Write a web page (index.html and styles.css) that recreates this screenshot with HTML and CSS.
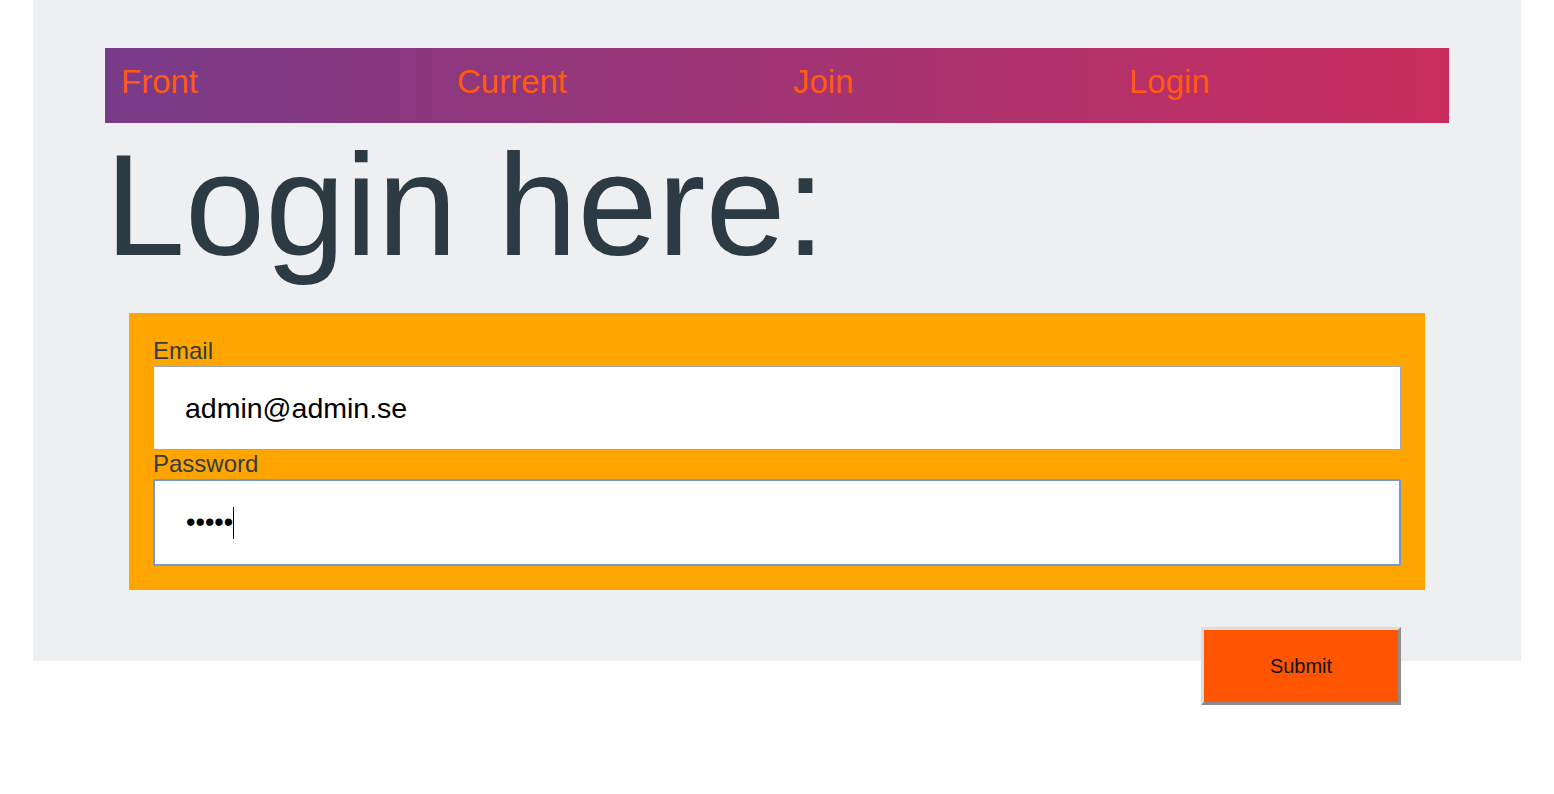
FILE: index.html
```html
<!DOCTYPE html>
<html lang="en">
<head>
<meta charset="utf-8">
<title>Login</title>
<link rel="stylesheet" href="styles.css">
</head>
<body>
<div class="page">
  <nav class="nav">
    <a class="nav-link" href="#">Front</a>
    <a class="nav-link" href="#">Current</a>
    <a class="nav-link" href="#">Join</a>
    <a class="nav-link" href="#">Login</a>
  </nav>
  <h1 class="title">Login here:</h1>
  <form class="login-form">
    <div class="form-box">
      <label class="field-label" for="email">Email</label>
      <input class="field-input" id="email" type="text" value="admin@admin.se">
      <label class="field-label" for="password">Password</label>
      <div class="field-input field-focused"><span class="dots">•••••</span><span class="caret"></span></div>
    </div>
    <div class="actions">
      <button class="submit-btn" type="button">Submit</button>
    </div>
  </form>
</div>
</body>
</html>
```

FILE: styles.css
```css
html, body {
  margin: 0;
  padding: 0;
  background: #ffffff;
  font-family: "Liberation Sans", Arial, sans-serif;
}

body {
  min-height: 794px;
}

.page {
  margin: 0 33px;
  background: #eeeff1;
  padding: 48px 72px 0;
}

.nav {
  display: grid;
  grid-template-columns: repeat(4, 1fr);
  height: 75px;
  background: linear-gradient(to right, #783b89, #c92d5e);
}

.nav-link {
  color: #ff5a0f;
  text-decoration: none;
  font-size: 33px;
  padding: 15px 16px 0;
  line-height: 38px;
}

.title {
  margin: 0 0 24px;
  font-weight: normal;
  font-size: 144px;
  line-height: 166px;
  color: #2b3a43;
}

.login-form {
  padding: 0 24px;
}

.form-box {
  background: #ffa500;
  padding: 24px;
  display: flex;
  flex-direction: column;
}

.field-label {
  font-size: 24px;
  line-height: 27px;
  padding-bottom: 2px;
  color: #333d42;
}

.field-input {
  height: 84px;
  box-sizing: border-box;
  border: 1px solid #a0a8b4;
  background: #fff;
  padding: 0 0 0 31px;
  font-family: "Liberation Sans", Arial, sans-serif;
  font-size: 28.5px;
  color: #000;
  outline: none;
  margin: 0;
  width: 100%;
}

.field-focused {
  height: 87px;
  border: 2px solid #7399d4;
  border-radius: 2px;
  display: flex;
  align-items: center;
  padding-left: 31px;
}

.dots {
  font-size: 27px;
  line-height: 1;
}

.caret {
  display: inline-block;
  width: 1px;
  height: 32px;
  background: #000;
}

.actions {
  display: flex;
  justify-content: flex-end;
  align-items: flex-start;
  padding: 37px 24px 0;
}

.submit-btn {
  width: 200px;
  height: 78px;
  margin-bottom: -44px;
  background: #ff5500;
  border-width: 3px;
  border-style: solid;
  border-color: #dcdcdc #8c8c8c #8c8c8c #dcdcdc;
  font-family: "Liberation Sans", Arial, sans-serif;
  font-size: 20px;
  color: #111;
  padding: 0;
}
```
